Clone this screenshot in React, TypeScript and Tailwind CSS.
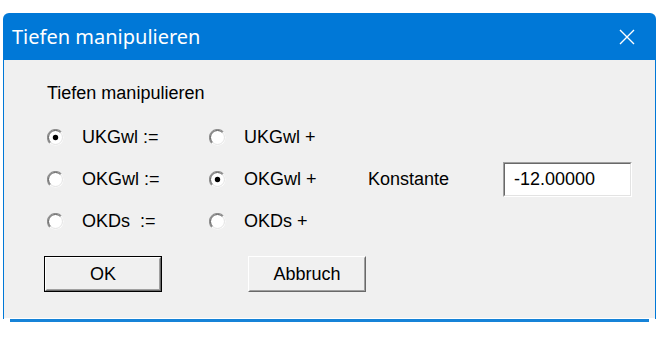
import { ReactNode } from 'react'

const ui = { fontFamily: '"Liberation Sans", Arial, sans-serif' }

function Radio({ checked }: { checked?: boolean }) {
  return (
    <svg width="17" height="17" viewBox="0 0 17 17" className="shrink-0">
      <circle cx="8.5" cy="8.5" r="8" fill="#ffffff" />
      <path d="M2.84 14.16 A8 8 0 0 1 14.16 2.84" fill="none" stroke="#8f8f8f" strokeWidth="1.2" />
      <path d="M3.55 13.45 A7 7 0 0 1 13.45 3.55" fill="none" stroke="#5a5a5a" strokeWidth="1" />
      <path d="M3.55 13.45 A7 7 0 0 0 13.45 3.55" fill="none" stroke="#e3e3e3" strokeWidth="1" />
      {checked && <circle cx="8.5" cy="8.5" r="2.7" fill="#000000" />}
    </svg>
  )
}

function Option({ label, checked, width }: { label: string; checked?: boolean; width: string }) {
  return (
    <div className={`flex items-center gap-[18px] ${width}`}>
      <Radio checked={checked} />
      <span className="whitespace-pre text-[18px] text-black">{label}</span>
    </div>
  )
}

function Button({ children, isDefault }: { children: ReactNode; isDefault?: boolean }) {
  return (
    <div className={`h-[36px] w-[118px] ${isDefault ? 'border border-black' : ''}`}>
      <div className="h-full w-full border border-white border-r-[#696969] border-b-[#696969]">
        <div className="flex h-full w-full items-center justify-center border border-[#f0f0f0] border-r-[#a0a0a0] border-b-[#a0a0a0] bg-[#f0f0f0] text-[18px] text-black">
          {children}
        </div>
      </div>
    </div>
  )
}

export default function App() {
  return (
    <div className="h-[337px] w-[670px] overflow-hidden bg-white pt-[13px]" style={ui}>
      <div className="ml-[3px] w-[653px]">
        <div className="flex h-[47px] items-center justify-between rounded-t-[6px] bg-[#0078d7] pl-[9px] pr-[21px]">
          <span className="text-[20px] text-white" style={{ fontFamily: '"Noto Sans", "Open Sans", sans-serif' }}>Tiefen manipulieren</span>
          <svg width="16" height="16" viewBox="0 0 16 16">
            <path d="M1 1 L15 15 M15 1 L1 15" stroke="#ffffff" strokeWidth="1.4" />
          </svg>
        </div>
        <div className="h-[258px] border-x border-[#0078d7] bg-[#f0f0f0] pt-[22px]">
          <div className="h-[22px] pl-[43px] text-[18px] leading-[22px] text-black">Tiefen manipulieren</div>
          <div className="mt-[12px] pl-[43px]">
            <div className="flex h-[42px] items-center">
              <Option label="UKGwl :=" checked width="w-[162px]" />
              <Option label="UKGwl +" width="w-[159px]" />
            </div>
            <div className="flex h-[42px] items-center">
              <Option label="OKGwl :=" width="w-[162px]" />
              <Option label="OKGwl +" checked width="w-[159px]" />
              <span className="w-[135px] text-[18px] text-black">Konstante</span>
              <div className="h-[35px] w-[129px] border border-[#a0a0a0] border-r-white border-b-white">
                <div className="flex h-full w-full items-center border border-[#696969] border-r-[#e3e3e3] border-b-[#e3e3e3] bg-white pl-[9px] text-[18px] text-black">
                  -12.00000
                </div>
              </div>
            </div>
            <div className="flex h-[42px] items-center">
              <Option label="OKDs  :=" width="w-[162px]" />
              <Option label="OKDs +" width="w-[159px]" />
            </div>
          </div>
          <div className="mt-[14px] flex gap-[86px] pl-[40px]">
            <Button isDefault>OK</Button>
            <Button>Abbruch</Button>
          </div>
        </div>
        <div className="h-[1px] border-x border-[#0078d7] bg-white" />
        <div className="mx-[7px] h-[3px] bg-[#1683d8]" />
      </div>
    </div>
  )
}
